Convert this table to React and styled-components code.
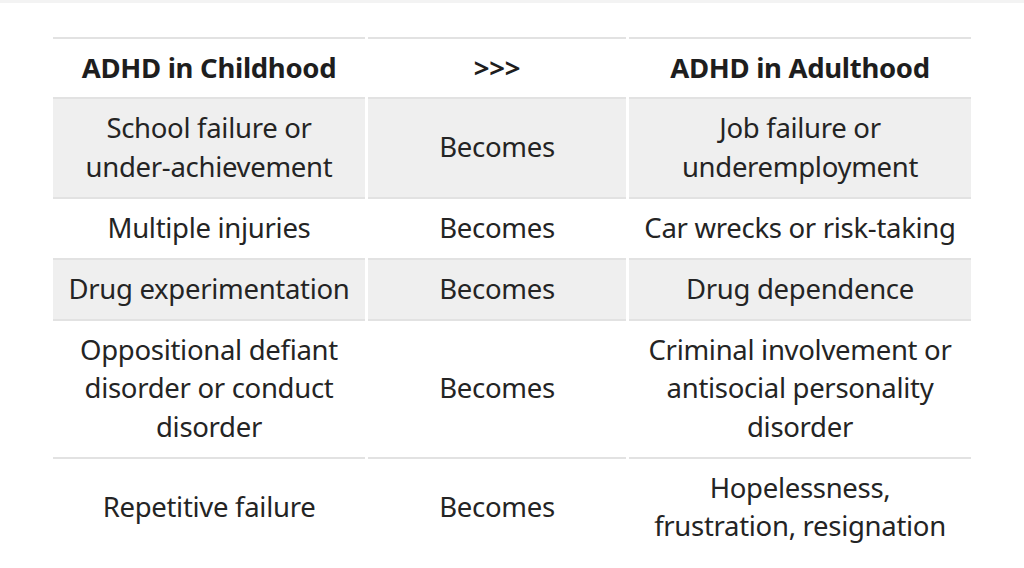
import styled, { createGlobalStyle } from "styled-components";

const GlobalStyle = createGlobalStyle`
  body {
    margin: 0;
    background: #fff;
    font-family: "Noto Sans", "Open Sans", sans-serif;
    color: #222;
  }
`;

const Page = styled.div`
  width: 1024px;
  height: 568px;
  overflow: hidden;
  background: #fff;
`;

const TopStrip = styled.div`
  height: 3px;
  background: #f3f3f3;
  margin-bottom: 34px;
`;

const Table = styled.table`
  table-layout: fixed;
  width: 924px;
  margin: 0 auto;
  border-collapse: separate;
  border-spacing: 3px 0;
`;

const NoWrap = styled.span`
  white-space: nowrap;
`;

const Head = styled.th`
  border-top: 2px solid #e2e2e2;
  padding: 10px 6px 9.5px;
  font-size: 27.5px;
  line-height: 38.5px;
  font-weight: 700;
  text-align: center;
  color: #1e1e1e;
  letter-spacing: -0.3px;
`;

const Cell = styled.td`
  border-top: 2px solid #e2e2e2;
  padding: 10px 6px 10.5px;
  font-size: 27.5px;
  line-height: 38.5px;
  text-align: center;
  vertical-align: middle;
  letter-spacing: -0.3px;
  color: #242424;
  background: ${(p) => (p.$shaded ? "#efefef" : "#fff")};
  background-clip: padding-box;
`;

const rows = [
  { child: <>School failure or <NoWrap>under-achievement</NoWrap></>, adult: "Job failure or underemployment", shaded: true },
  { child: "Multiple injuries", adult: "Car wrecks or risk-taking" },
  { child: "Drug experimentation", adult: "Drug dependence", shaded: true },
  { child: "Oppositional defiant disorder or conduct disorder", adult: "Criminal involvement or antisocial personality disorder" },
  { child: "Repetitive failure", adult: <>Hopelessness, <NoWrap>frustration, resignation</NoWrap></> },
];

export default function App() {
  return (
    <Page>
      <GlobalStyle />
      <TopStrip />
      <Table>
        <colgroup>
          <col style={{ width: 312 }} />
          <col style={{ width: 258 }} />
          <col style={{ width: 342 }} />
        </colgroup>
        <thead>
          <tr>
            <Head>ADHD in Childhood</Head>
            <Head>&gt;&gt;&gt;</Head>
            <Head>ADHD in Adulthood</Head>
          </tr>
        </thead>
        <tbody>
          {rows.map((row, i) => (
            <tr key={i}>
              <Cell $shaded={row.shaded}>{row.child}</Cell>
              <Cell $shaded={row.shaded}>Becomes</Cell>
              <Cell $shaded={row.shaded}>{row.adult}</Cell>
            </tr>
          ))}
        </tbody>
      </Table>
    </Page>
  );
}
